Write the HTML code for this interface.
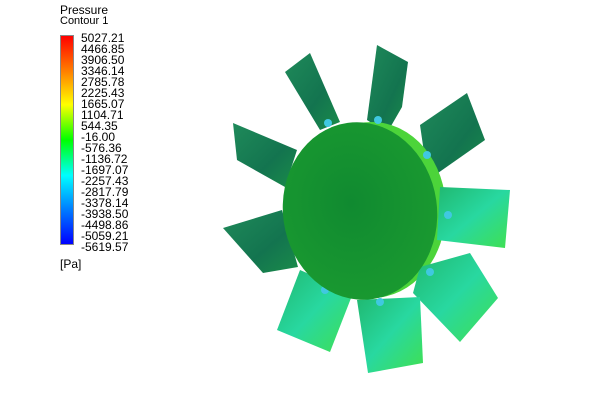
<!DOCTYPE html>
<html><head><style>
body{margin:0;width:600px;height:400px;background:#fff;position:relative;overflow:hidden;font-family:"Liberation Sans",Arial,sans-serif;}
.t{position:absolute;left:60px;font-size:12px;line-height:12px;color:#000}
.lab{position:absolute;left:81px;font-size:12px;line-height:12px;color:#000}
#bar{position:absolute;left:60px;top:35px;width:14px;height:210px;border:1px solid #888;box-sizing:border-box;
background:linear-gradient(to bottom,#ff0000 0%,#ff8000 17%,#ffff00 33%,#00ff00 50%,#00ffff 67%,#0080ff 83%,#0000ff 100%);}
</style></head><body>
<div class="t" style="top:4px">Pressure</div>
<div class="t" style="top:15px;font-size:11px">Contour 1</div>
<div id="bar"></div>
<div class="lab" style="top:32px">5027.21</div>
<div class="lab" style="top:43px">4466.85</div>
<div class="lab" style="top:54px">3906.50</div>
<div class="lab" style="top:65px">3346.14</div>
<div class="lab" style="top:76px">2785.78</div>
<div class="lab" style="top:87px">2225.43</div>
<div class="lab" style="top:98px">1665.07</div>
<div class="lab" style="top:109px">1104.71</div>
<div class="lab" style="top:120px">544.35</div>
<div class="lab" style="top:131px">-16.00</div>
<div class="lab" style="top:142px">-576.36</div>
<div class="lab" style="top:153px">-1136.72</div>
<div class="lab" style="top:164px">-1697.07</div>
<div class="lab" style="top:175px">-2257.43</div>
<div class="lab" style="top:186px">-2817.79</div>
<div class="lab" style="top:197px">-3378.14</div>
<div class="lab" style="top:208px">-3938.50</div>
<div class="lab" style="top:219px">-4498.86</div>
<div class="lab" style="top:230px">-5059.21</div>
<div class="lab" style="top:241px">-5619.57</div>
<div class="t" style="top:258px">[Pa]</div>
<svg width="600" height="400" style="position:absolute;left:0;top:0">
<defs>
<linearGradient id="dk" x1="0" y1="0" x2="1" y2="1"><stop offset="0" stop-color="#1f8a5a"/><stop offset="0.6" stop-color="#13744f"/><stop offset="1" stop-color="#1a8c4a"/></linearGradient>
<linearGradient id="lt" x1="0" y1="0" x2="1" y2="1"><stop offset="0" stop-color="#20b870"/><stop offset="0.5" stop-color="#28d8a0"/><stop offset="1" stop-color="#40e050"/></linearGradient>
<radialGradient id="hub" cx="0.45" cy="0.45" r="0.6"><stop offset="0" stop-color="#108a30"/><stop offset="1" stop-color="#1a9a30"/></radialGradient>
</defs>
<g stroke="none">
<polygon points="285,72 310,53 340,122 320,130" fill="url(#dk)"/>
<polygon points="377,45 408,62 402,107 387,133 367,120" fill="url(#dk)"/>
<polygon points="420,125 467,93 485,140 428,180" fill="url(#dk)"/>
<polygon points="233,123 297,150 285,187 237,160" fill="url(#dk)"/>
<polygon points="223,228 282,210 298,267 263,273" fill="url(#dk)"/>
<ellipse cx="372" cy="210" rx="74" ry="88" fill="#4cd43a"/>
<polygon points="440,187 510,190 505,248 437,240" fill="url(#lt)"/>
<polygon points="420,267 470,253 498,298 460,342 413,293" fill="url(#lt)"/>
<polygon points="357,300 420,297 423,363 368,373" fill="url(#lt)"/>
<polygon points="300,270 353,293 330,352 277,330" fill="url(#lt)"/>
<g fill="#40c8e0">
<circle cx="328" cy="123" r="4"/><circle cx="378" cy="120" r="4"/><circle cx="427" cy="155" r="4"/>
<circle cx="448" cy="215" r="4"/><circle cx="430" cy="272" r="4"/><circle cx="380" cy="302" r="4"/>
<circle cx="325" cy="290" r="4"/>
</g>
<ellipse cx="360" cy="211" rx="77" ry="89" transform="rotate(-8 360 211)" fill="url(#hub)"/>
</g>
</svg>
</body></html>
